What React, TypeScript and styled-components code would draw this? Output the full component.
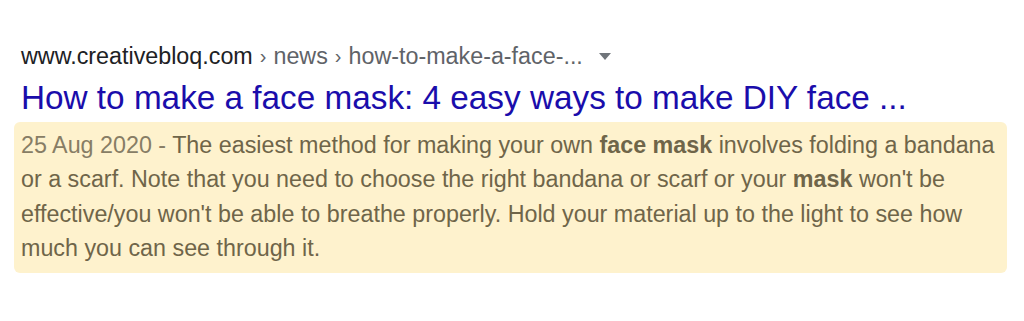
import React from "react";
import styled, { createGlobalStyle } from "styled-components";

const GlobalStyle = createGlobalStyle`
  body {
    margin: 0;
    background: #ffffff;
    font-family: "Liberation Sans", Arial, sans-serif;
  }
`;

const Page = styled.div`
  width: 1024px;
  height: 321px;
  padding: 41px 17px 0 14px;
  box-sizing: border-box;
`;

const Breadcrumb = styled.div`
  display: flex;
  align-items: center;
  padding-left: 7px;
  height: 30px;
  font-size: 23.3px;
  line-height: 30px;
  color: #5f6368;
  white-space: nowrap;
`;

const Domain = styled.span`
  color: #202124;
`;

const Sep = styled.span`
  margin: 0 7px;
  font-size: 20px;
`;

const Caret = styled.span`
  display: inline-block;
  width: 0;
  height: 0;
  margin-left: 16px;
  border-left: 6px solid transparent;
  border-right: 6px solid transparent;
  border-top: 7px solid #70757a;
`;

const Title = styled.a`
  display: block;
  padding-left: 7px;
  height: 40px;
  margin-top: 7px;
  font-size: 33.3px;
  line-height: 40px;
  color: #1a0dab;
  text-decoration: none;
  white-space: nowrap;
`;

const Snippet = styled.div`
  margin-top: 4px;
  padding: 6px 6px 8px 7px;
  background: #fef2cd;
  border-radius: 6px;
  font-size: 23.3px;
  line-height: 34.3px;
  color: #6f6549;
`;

const Date = styled.span`
  color: #877d65;
`;

const Em = styled.b`
  font-weight: 700;
`;

const App = () => {
  return (
    <>
      <GlobalStyle />
      <Page>
        <Breadcrumb>
          <Domain>www.creativebloq.com</Domain>
          <Sep>›</Sep>news<Sep>›</Sep>how-to-make-a-face-...
          <Caret />
        </Breadcrumb>
        <Title href="#">
          How to make a face mask: 4 easy ways to make DIY face ...
        </Title>
        <Snippet>
          <Date>25 Aug 2020 - </Date>The easiest method for making your own{" "}
          <Em>face mask</Em> involves folding a bandana or a scarf. Note that
          you need to choose the right bandana or scarf or your <Em>mask</Em>{" "}
          won't be effective/you won't be able to breathe properly. Hold your
          material up to the light to see how much you can see through it.
        </Snippet>
      </Page>
    </>
  );
};

export default App;
